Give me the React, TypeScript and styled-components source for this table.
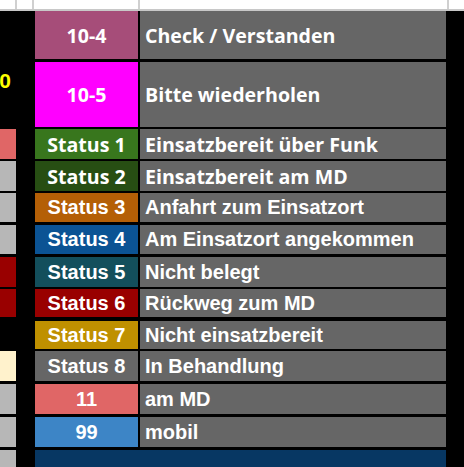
import React from 'react';
import styled, { createGlobalStyle, css } from 'styled-components';

const GlobalStyle = createGlobalStyle`
  html, body {
    margin: 0;
    padding: 0;
    background: #000;
  }
  body {
    font-family: 'Liberation Sans', Arial, sans-serif;
  }
`;

type Face = 'open' | 'arial';

interface StatusRow {
  code: string;
  label: string;
  bg: string;
  side: string;
  sideText?: string;
  face: Face;
  h: number;
  gap: number;
}

const rows: StatusRow[] = [
  { code: '10-4', label: 'Check / Verstanden', bg: '#a64d79', side: '#000', face: 'open', h: 48, gap: 0 },
  { code: '10-5', label: 'Bitte wiederholen', bg: '#ff00ff', side: '#000', sideText: '0', face: 'open', h: 65, gap: 3 },
  { code: 'Status 1', label: 'Einsatzbereit über Funk', bg: '#38761d', side: '#e06666', face: 'open', h: 30, gap: 2 },
  { code: 'Status 2', label: 'Einsatzbereit am MD', bg: '#274e13', side: '#b7b7b7', face: 'open', h: 30, gap: 2 },
  { code: 'Status 3', label: 'Anfahrt zum Einsatzort', bg: '#b45f06', side: '#b7b7b7', face: 'arial', h: 29, gap: 2 },
  { code: 'Status 4', label: 'Am Einsatzort angekommen', bg: '#0b5394', side: '#b7b7b7', face: 'arial', h: 29, gap: 3 },
  { code: 'Status 5', label: 'Nicht belegt', bg: '#134f5c', side: '#990000', face: 'arial', h: 30, gap: 3 },
  { code: 'Status 6', label: 'Rückweg zum MD', bg: '#990000', side: '#990000', face: 'arial', h: 28, gap: 2 },
  { code: 'Status 7', label: 'Nicht einsatzbereit', bg: '#bf9000', side: '#000', face: 'arial', h: 28, gap: 4 },
  { code: 'Status 8', label: 'In Behandlung', bg: '#666666', side: '#fff2cc', face: 'arial', h: 30, gap: 2 },
  { code: '11', label: 'am MD', bg: '#e06666', side: '#b7b7b7', face: 'arial', h: 30, gap: 3 },
  { code: '99', label: 'mobil', bg: '#3d85c6', side: '#b7b7b7', face: 'arial', h: 30, gap: 3 },
];

const faceCss = (face: Face) =>
  face === 'open'
    ? css`
        font-family: 'Open Sans', 'Noto Sans', sans-serif;
        font-size: 19.6px;
      `
    : css`
        font-family: 'Liberation Sans', Arial, sans-serif;
        font-size: 20px;
      `;

const Sheet = styled.div`
  width: 464px;
  height: 467px;
  overflow: hidden;
  background: #000;
  display: flex;
  flex-direction: column;
`;

const Header = styled.div`
  display: flex;
  height: 11px;
  flex: none;
  background: #fff;
  border-bottom: 2px solid #c8c8c8;
  box-sizing: border-box;
`;

const HeadCell = styled.div<{ $w?: number }>`
  box-sizing: border-box;
  height: 100%;
  ${({ $w }) =>
    $w
      ? css`
          width: ${$w}px;
          flex: none;
          border-right: 2px solid #d0d0d0;
        `
      : css`
          flex: 1;
        `}
`;

const Body = styled.div`
  display: flex;
  flex-direction: column;
  flex: 1;
`;

const Row = styled.div<{ $h?: number; $gap: number }>`
  display: grid;
  grid-template-columns: 16px 19px 103px 2px 306px 18px;
  margin-top: ${({ $gap }) => $gap}px;
  ${({ $h }) => ($h ? `height: ${$h}px;` : 'flex: 1;')}
  flex-shrink: 0;
`;

const Side = styled.div<{ $bg: string }>`
  grid-column: 1;
  background: ${({ $bg }) => $bg};
  overflow: hidden;
  text-align: right;
  padding: 8px 5px 0 0;
  font-family: 'Liberation Sans', Arial, sans-serif;
  font-weight: bold;
  font-size: 21px;
  line-height: 1;
  color: #ffff00;
  white-space: nowrap;
  direction: rtl;
`;

const Code = styled.div<{ $bg: string; $face: Face }>`
  grid-column: 3;
  background: ${({ $bg }) => $bg};
  display: flex;
  align-items: center;
  justify-content: center;
  color: #fff;
  font-weight: bold;
  white-space: nowrap;
  overflow: hidden;
  ${({ $face }) => faceCss($face)}
`;

const Label = styled.div<{ $face: Face }>`
  grid-column: 5;
  background: #666666;
  display: flex;
  align-items: center;
  padding-left: 5px;
  color: #fff;
  font-weight: bold;
  white-space: nowrap;
  overflow: hidden;
  ${({ $face }) => faceCss($face)}
`;

const Banner = styled.div`
  grid-column: 3 / span 3;
  background: #073763;
`;

export default function App() {
  return (
    <>
      <GlobalStyle />
      <Sheet>
        <Header>
          <HeadCell $w={17} />
          <HeadCell $w={17} />
          <HeadCell $w={106} />
          <HeadCell $w={309} />
          <HeadCell />
        </Header>
        <Body>
          {rows.map((r) => (
            <Row key={r.code} $h={r.h} $gap={r.gap}>
              <Side $bg={r.side}>{r.sideText}</Side>
              <Code $bg={r.bg} $face={r.face}>
                {r.code}
              </Code>
              <Label $face={r.face}>{r.label}</Label>
            </Row>
          ))}
          <Row $gap={3}>
            <Side $bg="#b7b7b7" />
            <Banner />
          </Row>
        </Body>
      </Sheet>
    </>
  );
}
